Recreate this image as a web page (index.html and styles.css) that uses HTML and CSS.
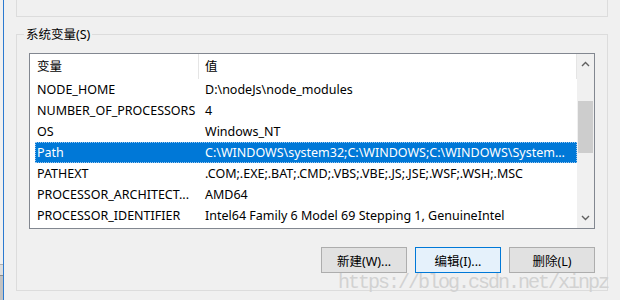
FILE: index.html
```html
<!DOCTYPE html>
<html lang="zh-CN">
<head>
<meta charset="utf-8">
<title>系统变量</title>
<link rel="stylesheet" href="styles.css">
</head>
<body>
<div class="window">
  <div class="edge">
    <div class="edge-top"></div>
    <div class="edge-mid"></div>
    <div class="edge-bot"></div>
  </div>
  <div class="frame">
    <div class="gb-top"></div>
    <fieldset class="gb">
      <legend class="gb-legend">系统变量(S)</legend>
      <div class="listbox">
        <div class="list">
          <div class="lhead">
            <div class="hc c1">变量</div>
            <div class="hc c2">值</div>
          </div>
          <div class="rows">
            <div class="row"><div class="cell n">NODE_HOME</div><div class="cell v">D:\nodeJs\node_modules</div></div>
            <div class="row"><div class="cell n">NUMBER_OF_PROCESSORS</div><div class="cell v">4</div></div>
            <div class="row"><div class="cell n">OS</div><div class="cell v">Windows_NT</div></div>
            <div class="row sel"><div class="cell n">Path</div><div class="cell v">C:\WINDOWS\system32;C:\WINDOWS;C:\WINDOWS\System...</div></div>
            <div class="row"><div class="cell n">PATHEXT</div><div class="cell v">.COM;.EXE;.BAT;.CMD;.VBS;.VBE;.JS;.JSE;.WSF;.WSH;.MSC</div></div>
            <div class="row"><div class="cell n">PROCESSOR_ARCHITECT...</div><div class="cell v">AMD64</div></div>
            <div class="row"><div class="cell n">PROCESSOR_IDENTIFIER</div><div class="cell v">Intel64 Family 6 Model 69 Stepping 1, GenuineIntel</div></div>
          </div>
        </div>
        <div class="vscroll">
          <div class="sb-btn">
            <svg class="sb-arrow" width="9" height="6" viewBox="0 0 9 6"><path d="M1 5 L4.5 1.5 L8 5" fill="none" stroke="#606060" stroke-width="1.4"/></svg>
          </div>
          <div class="sb-track"><div class="sb-thumb"></div></div>
          <div class="sb-btn">
            <svg class="sb-arrow" width="9" height="6" viewBox="0 0 9 6"><path d="M1 1 L4.5 4.5 L8 1" fill="none" stroke="#606060" stroke-width="1.4"/></svg>
          </div>
        </div>
      </div>
      <div class="buttons">
        <button class="btn">新建(W)...</button>
        <button class="btn primary">编辑(I)...</button>
        <button class="btn">删除(L)</button>
      </div>
    </fieldset>
  </div>
  <div class="watermark">https://blog.csdn.net/xinpz</div>
</div>
</body>
</html>
```
FILE: styles.css
```css
html, body {
  margin: 0;
  padding: 0;
  background: #f0f0f0;
}
body {
  font-family: "Noto Sans", "Noto Sans CJK SC", sans-serif;
  font-size: 12.5px;
  color: #000;
}
.window {
  position: relative;
  display: flex;
  width: 620px;
  height: 300px;
  overflow: hidden;
}
.edge {
  width: 3px;
  display: flex;
  flex-direction: column;
}
.edge-top {
  height: 264px;
  background: #f0f0f0;
}
.edge-mid {
  height: 10px;
  background: #dedede;
  border-top: 1px solid #b0b0b0;
}
.edge-bot {
  flex: 1;
  background: #c2c2c2;
  border-top: 1px solid #8c8c8c;
}
.frame {
  flex: 1;
  border-left: 1px solid #2b7ad0;
  padding-left: 12px;
}
.gb-top {
  width: 592px;
  height: 17px;
  box-sizing: border-box;
  border: 1px solid #dcdcdc;
  border-top: none;
}
.gb {
  width: 592px;
  box-sizing: border-box;
  margin: 10px 0 0;
  padding: 0 12px 17px;
  border: 1px solid #dcdcdc;
  min-width: 0;
}
.gb-legend {
  margin-left: -5px;
  padding: 0 2px;
  line-height: 15px;
  font-size: 12.5px;
}
.listbox {
  margin-top: 11px;
  height: 176px;
  box-sizing: border-box;
  border: 1px solid #828790;
  display: flex;
  background: #fff;
}
.list {
  width: 547px;
  display: flex;
  flex-direction: column;
  overflow: hidden;
}
.lhead {
  height: 25px;
  display: flex;
  flex: none;
}
.hc {
  line-height: 25px;
  box-sizing: border-box;
  white-space: nowrap;
}
.hc.c1 {
  width: 169px;
  padding-left: 7px;
  border-right: 1px solid #e5e5e5;
}
.hc.c2 {
  flex: 1;
  padding-left: 6px;
  border-right: 1px solid #e5e5e5;
}
.rows {
  padding-left: 5px;
}
.row {
  height: 21px;
  line-height: 21px;
  display: flex;
  white-space: nowrap;
}
.cell.n {
  width: 163px;
  padding-left: 2px;
  box-sizing: border-box;
  overflow: hidden;
}
.cell.v {
  flex: 1;
  padding-left: 7px;
  overflow: hidden;
}
.row.sel {
  background: #0078d7;
  color: #fff;
  outline: 1px dotted #9cc7ee;
  outline-offset: -1px;
}
.vscroll {
  width: 17px;
  background: #f0f0f0;
  display: flex;
  flex-direction: column;
}
.sb-btn {
  height: 20px;
  display: flex;
  align-items: center;
  justify-content: center;
  flex: none;
}
.sb-track {
  flex: 1;
  padding-top: 27px;
}
.sb-thumb {
  height: 52px;
  margin: 0 1px;
  background: #cdcdcd;
}
.buttons {
  margin-top: 18px;
  display: flex;
  justify-content: flex-end;
  gap: 8px;
}
.btn {
  width: 86px;
  height: 26px;
  box-sizing: border-box;
  border: 1px solid #adadad;
  background: #e1e1e1;
  font-family: "Noto Sans", "Noto Sans CJK SC", sans-serif;
  font-size: 12.5px;
  color: #000;
  padding: 0;
  margin: 0;
}
.btn.primary {
  border-color: #0078d7;
  background: #e5f1fb;
}
.watermark {
  position: absolute;
  left: 338px;
  top: 273px;
  font-family: "Liberation Mono", monospace;
  font-size: 20px;
  line-height: 20px;
  letter-spacing: -2px;
  color: #d2d2d2;
  white-space: nowrap;
  pointer-events: none;
}
```
